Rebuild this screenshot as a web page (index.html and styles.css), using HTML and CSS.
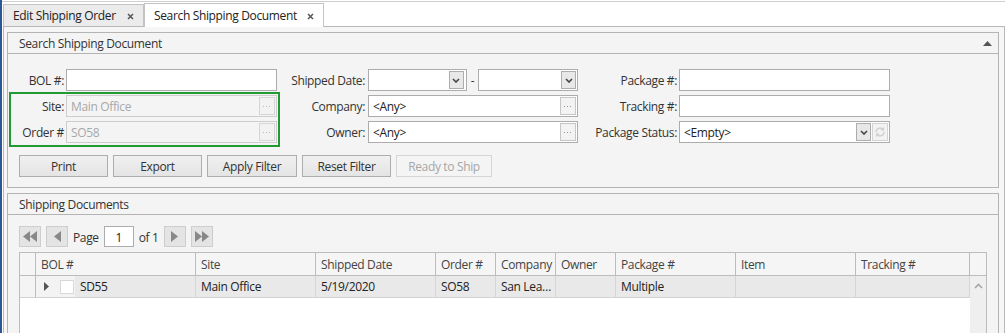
FILE: index.html
```html
<!DOCTYPE html>
<html>
<head>
<meta charset="utf-8">
<link rel="stylesheet" href="styles.css">
</head>
<body>
<div class="app">
  <div class="tabbar">
    <div class="tab">
      <span>Edit Shipping Order</span>
      <svg class="x" width="7" height="7" viewBox="0 0 7 7"><path d="M1 1L6 6M6 1L1 6" stroke="#555" stroke-width="1.5"/></svg>
    </div>
    <div class="tab active">
      <span>Search Shipping Document</span>
      <svg class="x" width="7" height="7" viewBox="0 0 7 7"><path d="M1 1L6 6M6 1L1 6" stroke="#555" stroke-width="1.5"/></svg>
    </div>
  </div>
  <div class="content">
    <section class="panel search">
      <div class="panel-head">
        <span>Search Shipping Document</span>
        <svg width="9" height="5" viewBox="0 0 9 5"><polygon points="0,5 4.5,0 9,5" fill="#555"/></svg>
      </div>
      <div class="panel-body">
        <div class="form">
          <label class="lbl">BOL #:</label>
          <div class="field"></div>
          <label class="lbl lbl2">Shipped Date:</label>
          <div class="daterange">
            <div class="field date"><span class="fill"></span><span class="dd"><svg width="8" height="5" viewBox="0 0 8 5"><polyline points="1,1 4,4 7,1" fill="none" stroke="#444" stroke-width="1.6"/></svg></span></div>
            <span class="dash">-</span>
            <div class="field date date2"><span class="fill"></span><span class="dd"><svg width="8" height="5" viewBox="0 0 8 5"><polyline points="1,1 4,4 7,1" fill="none" stroke="#444" stroke-width="1.6"/></svg></span></div>
          </div>
          <label class="lbl lbl3">Package #:</label>
          <div class="field"></div>

          <label class="lbl">Site:</label>
          <div class="field disabled"><span class="fill">Main Office</span><span class="ell"><svg width="14" height="3" viewBox="0 0 14 3"><rect x="3" y="1" width="1" height="1" fill="#bbb"/><rect x="6" y="1" width="1" height="1" fill="#bbb"/><rect x="9" y="1" width="1" height="1" fill="#bbb"/></svg></span></div>
          <label class="lbl lbl2">Company:</label>
          <div class="field"><span class="fill">&lt;Any&gt;</span><span class="ell on"><svg width="14" height="3" viewBox="0 0 14 3"><rect x="3" y="1" width="1" height="1" fill="#999"/><rect x="6" y="1" width="1" height="1" fill="#999"/><rect x="9" y="1" width="1" height="1" fill="#999"/></svg></span></div>
          <label class="lbl lbl3">Tracking #:</label>
          <div class="field"></div>

          <label class="lbl">Order #</label>
          <div class="field disabled"><span class="fill">SO58</span><span class="ell"><svg width="14" height="3" viewBox="0 0 14 3"><rect x="3" y="1" width="1" height="1" fill="#bbb"/><rect x="6" y="1" width="1" height="1" fill="#bbb"/><rect x="9" y="1" width="1" height="1" fill="#bbb"/></svg></span></div>
          <label class="lbl lbl2">Owner:</label>
          <div class="field"><span class="fill">&lt;Any&gt;</span><span class="ell on"><svg width="14" height="3" viewBox="0 0 14 3"><rect x="3" y="1" width="1" height="1" fill="#999"/><rect x="6" y="1" width="1" height="1" fill="#999"/><rect x="9" y="1" width="1" height="1" fill="#999"/></svg></span></div>
          <label class="lbl lbl3">Package Status:</label>
          <div class="field"><span class="fill">&lt;Empty&gt;</span><span class="dd"><svg width="8" height="5" viewBox="0 0 8 5"><polyline points="1,1 4,4 7,1" fill="none" stroke="#444" stroke-width="1.6"/></svg></span><span class="refresh"><svg width="12" height="12" viewBox="0 0 12 12"><path d="M2 6a4 4 0 0 1 7-2.6" fill="none" stroke="#cfcfcf" stroke-width="1.4"/><polygon points="10,1 10,5 6.5,4" fill="#cfcfcf"/><path d="M10 6a4 4 0 0 1-7 2.6" fill="none" stroke="#cfcfcf" stroke-width="1.4"/><polygon points="2,11 2,7 5.5,8" fill="#cfcfcf"/></svg></span></div>

          <div class="highlight"></div>
        </div>
        <div class="buttons">
          <button class="btn">Print</button>
          <button class="btn">Export</button>
          <button class="btn wide1">Apply Filter</button>
          <button class="btn">Reset Filter</button>
          <button class="btn wide2 off">Ready to Ship</button>
        </div>
      </div>
    </section>

    <section class="panel docs">
      <div class="panel-head"><span>Shipping Documents</span></div>
      <div class="panel-body">
        <div class="pager">
          <span class="pbtn"><svg width="14" height="11" viewBox="0 0 14 11"><polygon points="7,0 7,11 0,5.5" fill="#888"/><polygon points="14,0 14,11 7,5.5" fill="#888"/></svg></span>
          <span class="pbtn"><svg width="7" height="11" viewBox="0 0 7 11"><polygon points="7,0 7,11 0,5.5" fill="#888"/></svg></span>
          <span class="ptext">Page</span>
          <span class="pinput">1</span>
          <span class="ptext">of 1</span>
          <span class="pbtn"><svg width="7" height="11" viewBox="0 0 7 11"><polygon points="0,0 0,11 7,5.5" fill="#888"/></svg></span>
          <span class="pbtn"><svg width="14" height="11" viewBox="0 0 14 11"><polygon points="0,0 0,11 7,5.5" fill="#888"/><polygon points="7,0 7,11 14,5.5" fill="#888"/></svg></span>
        </div>
        <div class="grid">
          <div class="ghead">
            <div class="hc"></div>
            <div class="hc">BOL #</div>
            <div class="hc">Site</div>
            <div class="hc">Shipped Date</div>
            <div class="hc">Order #</div>
            <div class="hc">Company</div>
            <div class="hc">Owner</div>
            <div class="hc">Package #</div>
            <div class="hc">Item</div>
            <div class="hc">Tracking #</div>
            <div class="hc"></div>
          </div>
          <div class="gbody">
            <div class="rows">
              <div class="grow">
                <div class="rc ind"></div>
                <div class="rc bol">
                  <span class="expander">
                    <svg width="5" height="9" viewBox="0 0 5 9"><polygon points="0,0 0,9 5,4.5" fill="#555"/></svg>
                    <span class="chk"></span>
                  </span>
                  <span class="txt">SD55</span>
                </div>
                <div class="rc">Main Office</div>
                <div class="rc">5/19/2020</div>
                <div class="rc">SO58</div>
                <div class="rc">San Lea…</div>
                <div class="rc"></div>
                <div class="rc">Multiple</div>
                <div class="rc"></div>
                <div class="rc"></div>
              </div>
            </div>
            <div class="vscroll">
              <svg width="9" height="6" viewBox="0 0 9 6"><polyline points="1,5 4.5,1.5 8,5" fill="none" stroke="#a8a8a8" stroke-width="1.6"/></svg>
            </div>
          </div>
        </div>
      </div>
    </section>
  </div>
</div>
</body>
</html>
```

FILE: styles.css
```css
* { box-sizing: border-box; }
html, body { margin: 0; padding: 0; }
body {
  width: 1005px;
  height: 333px;
  overflow: hidden;
  background: #ffffff;
  font-family: "Open Sans", "Noto Sans", sans-serif;
  font-size: 12px;
  letter-spacing: -0.35px;
  color: #333;
}
.app {
  height: 380px;
  border-left: 2px solid #2b5797;
  display: flex;
  flex-direction: column;
}
.tabbar {
  height: 25px;
  margin-top: 1px;
  border-top: 1px solid #cfcfcf;
  display: flex;
  align-items: flex-end;
  padding-left: 1px;
  flex: none;
}
.tab {
  width: 141px;
  height: 22px;
  border: 1px solid #c4c4c4;
  border-bottom: none;
  background: #ebebeb;
  display: flex;
  align-items: center;
  justify-content: space-between;
  padding: 1px 9px 0 9px;
  color: #222;
  line-height: 20px;
}
.tab.active {
  width: 180px;
  height: 24px;
  margin-bottom: -1px;
  background: #ffffff;
  position: relative;
  z-index: 1;
  padding-bottom: 0;
}
.content {
  flex: 1;
  margin-left: 1px;
  border: 1px solid #b8b8b8;
  background: #f6f6f6;
  padding: 5px 5px 0 3px;
  display: flex;
  flex-direction: column;
  min-height: 0;
  overflow: hidden;
}
.panel {
  border: 1px solid #b4b4b4;
  background: #f4f4f4;
}
.panel-head {
  height: 21px;
  border-bottom: 1px solid #b4b4b4;
  line-height: 20px;
  padding: 1px 6px 0 11px;
  display: flex;
  justify-content: space-between;
  align-items: center;
  color: #333;
}
.search .panel-body {
  padding: 15px 0 10px 0;
}
.form {
  position: relative;
  display: grid;
  grid-template-columns: 58px 211px 91px 210px 101px 211px;
  grid-auto-rows: 22px;
  row-gap: 4px;
}
.lbl {
  text-align: right;
  line-height: 22px;
  padding-top: 1px;
  padding-right: 2px;
  color: #333;
  white-space: nowrap;
}
.lbl2 { padding-right: 3px; }
.lbl3 { padding-right: 2px; }
.field {
  height: 22px;
  border: 1px solid #acacac;
  background: #fff;
  display: flex;
  align-items: center;
  padding: 1px;
}
.field .fill {
  flex: 1;
  padding-left: 3px;
  padding-top: 1px;
  line-height: 18px;
  white-space: nowrap;
  overflow: hidden;
  color: #222;
}
.field.disabled {
  border-color: #cdcdcd;
  background: #f4f4f4;
}
.field.disabled .fill { color: #a8a8a8; }
.ell {
  width: 16px;
  height: 18px;
  border: 1px solid #d6d6d6;
  background: #f2f2f2;
  display: flex;
  align-items: center;
  justify-content: center;
  flex: none;
}
.ell.on {
  border-color: #c6c6c6;
  background: #f3f3f3;
}
.dd {
  width: 15px;
  height: 18px;
  border: 1px solid #adadad;
  background: #e8e8e8;
  display: flex;
  align-items: center;
  justify-content: center;
  flex: none;
}
.refresh {
  width: 16px;
  height: 18px;
  border: 1px solid #d3d3d3;
  background: #f2f2f2;
  margin-left: 1px;
  display: flex;
  align-items: center;
  justify-content: center;
  flex: none;
}
.daterange {
  display: flex;
  align-items: center;
}
.field.date { width: 99px; padding-right: 2px; }
.field.date2 { width: 100px; padding-right: 1px; }
.dash {
  width: 12px;
  text-align: center;
  color: #333;
}
.highlight {
  position: absolute;
  left: 1px;
  top: 23px;
  width: 271px;
  height: 55px;
  border: 2px solid #229a33;
  pointer-events: none;
}
.buttons {
  display: flex;
  gap: 5px;
  margin-top: 12px;
  padding-left: 11px;
}
.btn {
  width: 89px;
  height: 22px;
  border: 1px solid #adadad;
  background: linear-gradient(#f0f0f0, #e4e4e4);
  font-family: inherit;
  font-size: 12px;
  letter-spacing: -0.35px;
  color: #333;
  padding: 2px 0 0 0;
  line-height: 18px;
}
.btn.wide1 { width: 90px; }
.btn.wide2 { width: 96px; }
.btn.off {
  border-color: #d5d5d5;
  background: #f4f4f4;
  color: #a6a6a6;
}
.docs {
  margin-top: 5px;
  flex: 1;
  display: flex;
  flex-direction: column;
}
.docs .panel-body {
  padding: 11px 11px 0 11px;
  flex: 1;
  display: flex;
  flex-direction: column;
}
.pager {
  display: flex;
  align-items: center;
  gap: 5px;
  height: 21px;
}
.pbtn {
  width: 22px;
  height: 21px;
  border: 1px solid #cdcdcd;
  background: #e4e4e4;
  display: flex;
  align-items: center;
  justify-content: center;
}
.ptext { color: #333; padding-top: 2px; }
.pinput {
  width: 30px;
  height: 21px;
  border: 1px solid #acacac;
  background: #fff;
  text-align: center;
  line-height: 19px;
  padding-top: 1px;
  color: #222;
}
.grid {
  margin-top: 5px;
  border-left: 1px solid #bcbcbc;
  border-top: 1px solid #bcbcbc;
  background: #fff;
  flex: 1;
  display: flex;
  flex-direction: column;
}
.ghead {
  display: grid;
  grid-template-columns: 16px 160px 120px 120px 60px 60px 60px 120px 120px 114px 17px;
  height: 23px;
}
.hc {
  border-right: 1px solid #bcbcbc;
  border-bottom: 1px solid #bcbcbc;
  background: #f5f5f5;
  padding-left: 5px;
  padding-top: 1px;
  line-height: 21px;
  color: #444;
  white-space: nowrap;
  overflow: hidden;
}
.gbody {
  display: flex;
  flex: 1;
}
.rows { width: 950px; }
.grow {
  display: grid;
  grid-template-columns: 16px 160px 120px 120px 60px 60px 60px 120px 120px 114px;
  height: 22px;
}
.rc {
  background: #e9e9e9;
  border-right: 1px solid #d6d6d6;
  border-bottom: 1px solid #d2d2d2;
  padding-left: 5px;
  padding-top: 1px;
  line-height: 20px;
  color: #222;
  white-space: nowrap;
  overflow: hidden;
}
.rc.ind {
  background: #f4f4f4;
  border-right-color: #bcbcbc;
}
.rc.bol {
  padding-left: 0;
  padding-top: 0;
  display: flex;
  background: #e9e9e9;
}
.expander {
  width: 39px;
  background: #f3f3f3;
  display: flex;
  align-items: center;
  padding-left: 8px;
  gap: 11px;
}
.chk {
  width: 14px;
  height: 14px;
  background: #fff;
  border: 1px solid #d8d8d8;
}
.bol .txt { padding-left: 5px; padding-top: 1px; }
.vscroll {
  width: 17px;
  background: #efefef;
  border-right: 1px solid #bcbcbc;
  display: flex;
  justify-content: center;
  align-items: flex-start;
  padding-top: 7px;
}
```
